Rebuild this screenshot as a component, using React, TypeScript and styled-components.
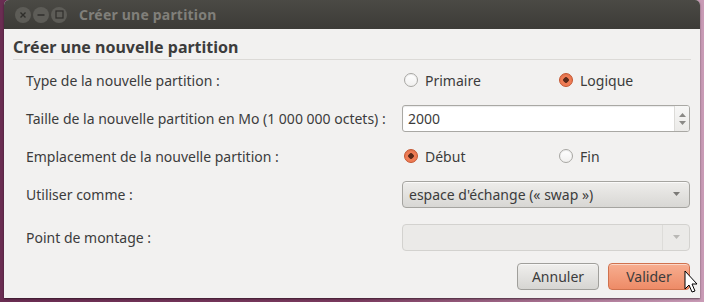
import React from "react";
import styled, { createGlobalStyle } from "styled-components";

const GlobalStyle = createGlobalStyle`
  html, body {
    margin: 0;
    padding: 0;
    width: 704px;
    height: 302px;
    overflow: hidden;
    background: linear-gradient(90deg, #6a2d52 0%, #7a3a5e 50%, #c99bb6 100%);
    font-family: "Noto Sans", "DejaVu Sans", sans-serif;
  }
`;

const Desktop = styled.div`
  width: 704px;
  height: 302px;
  padding-left: 4px;
  box-sizing: border-box;
`;

const Window = styled.div`
  width: 696px;
  height: 298px;
  background: #f2f1f0;
  border-radius: 5px 5px 0 0;
  box-shadow: 0 1px 2px rgba(0, 0, 0, 0.5);
  display: flex;
  flex-direction: column;
  position: relative;
  overflow: hidden;
`;

const TitleBar = styled.div`
  height: 29px;
  background: linear-gradient(#4b4a45, #3c3b37);
  display: flex;
  align-items: center;
  padding-left: 11px;
  gap: 2px;
  flex-shrink: 0;
`;

const WinButton = styled.div`
  width: 16px;
  height: 16px;
  border-radius: 50%;
  background: #5d5c57;
  display: flex;
  align-items: center;
  justify-content: center;
`;

const WinTitle = styled.div`
  margin-left: 10px;
  color: #807f7a;
  font-weight: bold;
  font-size: 14px;
  letter-spacing: 0.2px;
`;

const Content = styled.div`
  padding: 7px 9px 0 9px;
  display: flex;
  flex-direction: column;
`;

const Heading = styled.div`
  font-size: 16px;
  font-weight: bold;
  color: #3c3c3c;
  height: 23px;
  line-height: 23px;
  border-bottom: 1px solid #dcdad7;
`;

const Form = styled.div`
  display: grid;
  grid-template-columns: 376px 288px;
  grid-template-rows: 38px 38px 38px 38px 48px;
  padding-left: 13px;
  padding-top: 1px;
  align-items: center;
`;

const Label = styled.div`
  font-size: 14px;
  color: #3c3c3c;
`;

const RadioGroup = styled.div`
  display: grid;
  grid-template-columns: 155px 1fr;
  padding-left: 2px;
`;

const RadioOption = styled.div`
  display: flex;
  align-items: center;
  gap: 7px;
  font-size: 14px;
  color: #3c3c3c;
`;

const RadioDot = styled.span<{ $on?: boolean }>`
  width: 14px;
  height: 14px;
  border-radius: 50%;
  box-sizing: border-box;
  border: 1px solid ${({ $on }) => ($on ? "#c4542e" : "#a8a7a3")};
  background: ${({ $on }) =>
    $on ? "radial-gradient(circle, #5b2a1a 0 2.5px, #ef7c55 3px)" : "linear-gradient(#ffffff, #f1f0ef)"};
  box-shadow: inset 0 1px 1px rgba(0, 0, 0, 0.08);
`;

const SpinBox = styled.div`
  height: 25px;
  display: flex;
  background: #ffffff;
  border: 1px solid #a9a8a4;
  border-radius: 3px;
  box-shadow: inset 0 1px 1px rgba(0, 0, 0, 0.08);
  margin-top: 1px;
`;

const SpinValue = styled.div`
  flex: 1;
  padding-left: 5px;
  font-size: 14px;
  color: #3c3c3c;
  line-height: 25px;
`;

const Stepper = styled.div`
  width: 14px;
  border-left: 1px solid #dcdbd8;
  background: linear-gradient(#f7f7f6, #ebeae8);
  border-radius: 0 2px 2px 0;
  display: flex;
  flex-direction: column;
  align-items: center;
  justify-content: center;
  gap: 4px;
`;

const Combo = styled.div<{ $disabled?: boolean }>`
  height: 27px;
  box-sizing: border-box;
  display: flex;
  align-items: center;
  border-radius: 4px;
  border: 1px solid ${({ $disabled }) => ($disabled ? "#d3d2cf" : "#a5a4a0")};
  background: ${({ $disabled }) =>
    $disabled ? "#ebeae8" : "linear-gradient(#eeedeb, #d8d7d4)"};
  font-size: 14px;
  color: #3c3c3c;
  box-shadow: ${({ $disabled }) => ($disabled ? "none" : "inset 0 1px 0 rgba(255,255,255,0.7)")};
`;

const ComboText = styled.div`
  flex: 1;
  padding-left: 6px;
`;

const ComboArrow = styled.div<{ $split?: boolean }>`
  width: 26px;
  align-self: stretch;
  display: flex;
  align-items: center;
  justify-content: center;
  border-left: ${({ $split }) => ($split ? "1px solid #dddcd9" : "none")};
`;

const ButtonRow = styled.div`
  display: flex;
  justify-content: flex-end;
  gap: 9px;
  padding-right: 1px;
  margin-top: 2px;
`;

const Button = styled.div<{ $primary?: boolean }>`
  width: 82px;
  height: 27px;
  box-sizing: border-box;
  display: flex;
  align-items: center;
  justify-content: center;
  border-radius: 4px;
  font-size: 14px;
  color: #3c3c3c;
  border: 1px solid ${({ $primary }) => ($primary ? "#d0724e" : "#a09f9b")};
  background: ${({ $primary }) =>
    $primary ? "linear-gradient(#f7ae90, #ee8b67)" : "linear-gradient(#f0efed, #d6d5d2)"};
  box-shadow: inset 0 1px 0 rgba(255, 255, 255, 0.5);
`;

const Pointer = styled.svg`
  position: absolute;
  left: 680px;
  top: 270px;
`;

const Triangle = ({ up, color = "#8a8986" }: { up?: boolean; color?: string }) => (
  <svg width="7" height="4" viewBox="0 0 7 4">
    <path d={up ? "M0 4 L3.5 0 L7 4 Z" : "M0 0 L7 0 L3.5 4 Z"} fill={color} />
  </svg>
);

export default function App() {
  return (
    <>
      <GlobalStyle />
      <Desktop>
        <Window>
          <TitleBar>
            <WinButton>
              <svg width="8" height="8" viewBox="0 0 8 8">
                <path d="M1.5 1.5 L6.5 6.5 M6.5 1.5 L1.5 6.5" stroke="#2f2e2b" strokeWidth="1.4" />
              </svg>
            </WinButton>
            <WinButton>
              <svg width="8" height="8" viewBox="0 0 8 8">
                <path d="M0.5 4 H7.5" stroke="#2f2e2b" strokeWidth="1.4" />
              </svg>
            </WinButton>
            <WinButton>
              <svg width="9" height="9" viewBox="0 0 9 9">
                <rect x="1" y="1" width="7" height="7" fill="none" stroke="#2f2e2b" strokeWidth="1.2" />
              </svg>
            </WinButton>
            <WinTitle>Créer une partition</WinTitle>
          </TitleBar>
          <Content>
            <Heading>Créer une nouvelle partition</Heading>
            <Form>
              <Label>Type de la nouvelle partition :</Label>
              <RadioGroup>
                <RadioOption>
                  <RadioDot />
                  Primaire
                </RadioOption>
                <RadioOption>
                  <RadioDot $on />
                  Logique
                </RadioOption>
              </RadioGroup>

              <Label>Taille de la nouvelle partition en Mo (1 000 000 octets) :</Label>
              <SpinBox>
                <SpinValue>2000</SpinValue>
                <Stepper>
                  <Triangle up />
                  <Triangle />
                </Stepper>
              </SpinBox>

              <Label>Emplacement de la nouvelle partition :</Label>
              <RadioGroup>
                <RadioOption>
                  <RadioDot $on />
                  Début
                </RadioOption>
                <RadioOption>
                  <RadioDot />
                  Fin
                </RadioOption>
              </RadioGroup>

              <Label>Utiliser comme :</Label>
              <Combo>
                <ComboText>espace d'échange (« swap »)</ComboText>
                <ComboArrow>
                  <Triangle color="#7a7976" />
                </ComboArrow>
              </Combo>

              <Label>Point de montage :</Label>
              <Combo $disabled>
                <ComboText />
                <ComboArrow $split>
                  <Triangle color="#b9b8b5" />
                </ComboArrow>
              </Combo>
            </Form>
            <ButtonRow>
              <Button>Annuler</Button>
              <Button $primary>Valider</Button>
            </ButtonRow>
          </Content>
          <Pointer width="14" height="24" viewBox="0 0 14 24">
            <path d="M1 1 L1 19 L5 15 L8 22 L11 21 L8 14 L13 14 Z" fill="#ffffff" stroke="#000000" strokeWidth="1" />
          </Pointer>
        </Window>
      </Desktop>
    </>
  );
}
